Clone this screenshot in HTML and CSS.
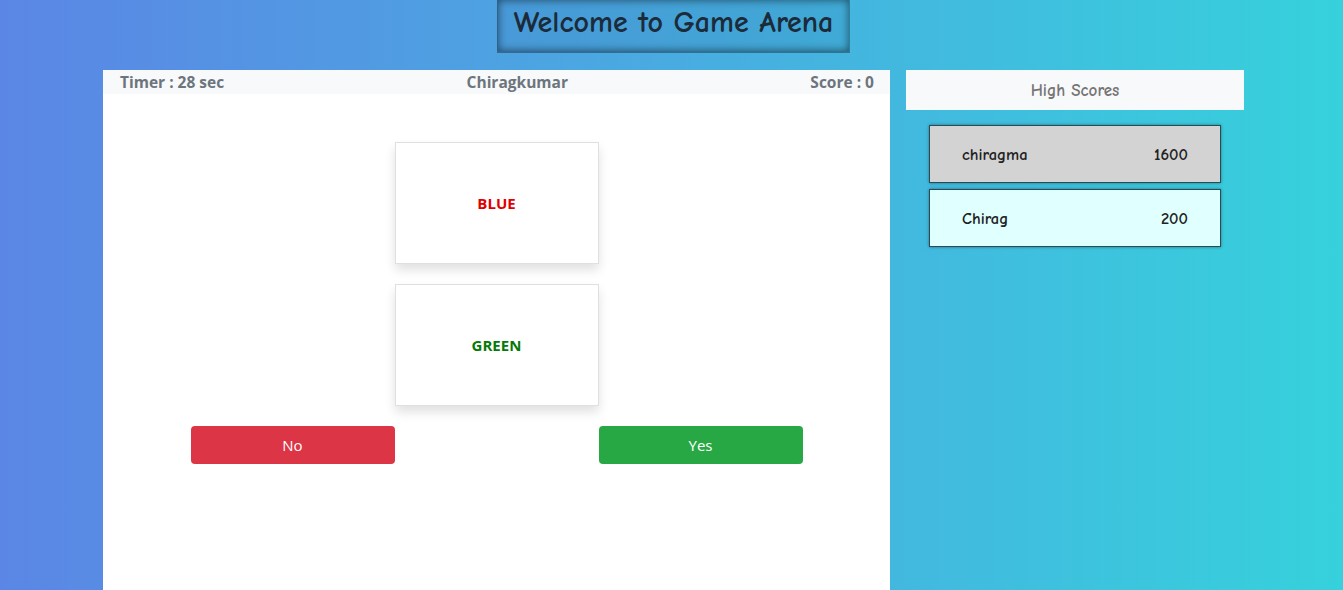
FILE: index.html
```html
<!DOCTYPE html>
<html>
<head>
<meta charset="utf-8">
<link rel="stylesheet" href="styles.css">
</head>
<body>
<header class="top">
  <h1 class="title">Welcome to Game Arena</h1>
</header>
<div class="layout">
  <main class="game">
    <div class="status">
      <span>Timer : 28 sec</span>
      <span>Chiragkumar</span>
      <span>Score : 0</span>
    </div>
    <div class="board">
      <div class="card"><span class="word red">BLUE</span></div>
      <div class="card"><span class="word green">GREEN</span></div>
      <div class="actions">
        <button class="btn btn-no">No</button>
        <div class="spacer"></div>
        <button class="btn btn-yes">Yes</button>
      </div>
    </div>
  </main>
  <aside class="scores">
    <div class="scores-head">High Scores</div>
    <ul class="score-list">
      <li class="score-item first"><span>chiragma</span><span>1600</span></li>
      <li class="score-item second"><span>Chirag</span><span>200</span></li>
    </ul>
  </aside>
</div>
</body>
</html>
```
FILE: styles.css
```css
html, body {
  margin: 0;
  height: 100%;
}
body {
  background: linear-gradient(to right, #5b86e5, #36d1dc);
  font-family: "Open Sans", "Noto Sans", sans-serif;
  overflow: hidden;
}
.top {
  display: flex;
  justify-content: center;
  padding-left: 4px;
}
.title {
  margin: 0;
  width: 353px;
  height: 53px;
  box-sizing: border-box;
  display: flex;
  align-items: center;
  justify-content: center;
  padding-bottom: 6px;
  font-family: "Comic Sans MS", "Comic Neue", cursive, sans-serif;
  font-weight: 700;
  font-size: 30px;
  color: #1c2b3a;
  background: rgba(40, 90, 150, 0.12);
  box-shadow: inset 0 0 8px rgba(0, 0, 0, 0.55);
  border-left: 1px solid rgba(0,0,0,0.35);
  border-right: 1px solid rgba(0,0,0,0.25);
  border-bottom: 2px solid rgba(0,0,0,0.3);
}
.layout {
  display: flex;
  gap: 16px;
  margin-top: 17px;
  padding-left: 103px;
  align-items: flex-start;
}
.game {
  width: 787px;
  height: 530px;
  background: #fff;
}
.status {
  display: flex;
  justify-content: space-between;
  height: 24px;
  align-items: center;
  padding: 0 16px 0 17px;
  background: #f8f9fa;
  font-weight: bold;
  font-size: 15.5px;
  color: #6c757d;
}
.board {
  display: flex;
  flex-direction: column;
  align-items: center;
  padding-top: 48px;
  gap: 20px;
}
.card {
  width: 204px;
  height: 122px;
  box-sizing: border-box;
  border: 1px solid #e0e0e0;
  box-shadow: 0 6px 10px rgba(0, 0, 0, 0.12);
  display: flex;
  align-items: center;
  justify-content: center;
}
.word {
  font-weight: bold;
  font-size: 15px;
}
.red { color: #e00000; }
.green { color: #067a06; }
.actions {
  display: flex;
  align-items: center;
}
.spacer { width: 204px; }
.btn {
  width: 204px;
  height: 38px;
  border: none;
  border-radius: 4px;
  color: #fff;
  font-family: "Open Sans", "Noto Sans", sans-serif;
  font-size: 15px;
  padding: 0;
}
.btn-no { background: #dc3545; }
.btn-yes { background: #28a745; }
.scores {
  width: 338px;
}
.scores-head {
  height: 40px;
  background: #f8f9fa;
  display: flex;
  align-items: center;
  justify-content: center;
  font-family: "Comic Sans MS", "Comic Neue", cursive, sans-serif;
  font-weight: 700;
  font-size: 17px;
  color: #757575;
}
.score-list {
  list-style: none;
  margin: 15px 0 0;
  padding: 0;
  display: flex;
  flex-direction: column;
  align-items: center;
  gap: 6px;
}
.score-item {
  width: 292px;
  height: 58px;
  box-sizing: border-box;
  border: 1px solid #2c4a52;
  box-shadow: 0 0 3px rgba(0, 0, 0, 0.4);
  display: flex;
  justify-content: space-between;
  align-items: center;
  padding: 0 32px 0 32px;
  font-family: "Comic Sans MS", "Comic Neue", cursive, sans-serif;
  font-weight: 700;
  font-size: 16.5px;
  color: #222;
}
.first { background: #d3d3d3; }
.second { background: #e0ffff; }
```
